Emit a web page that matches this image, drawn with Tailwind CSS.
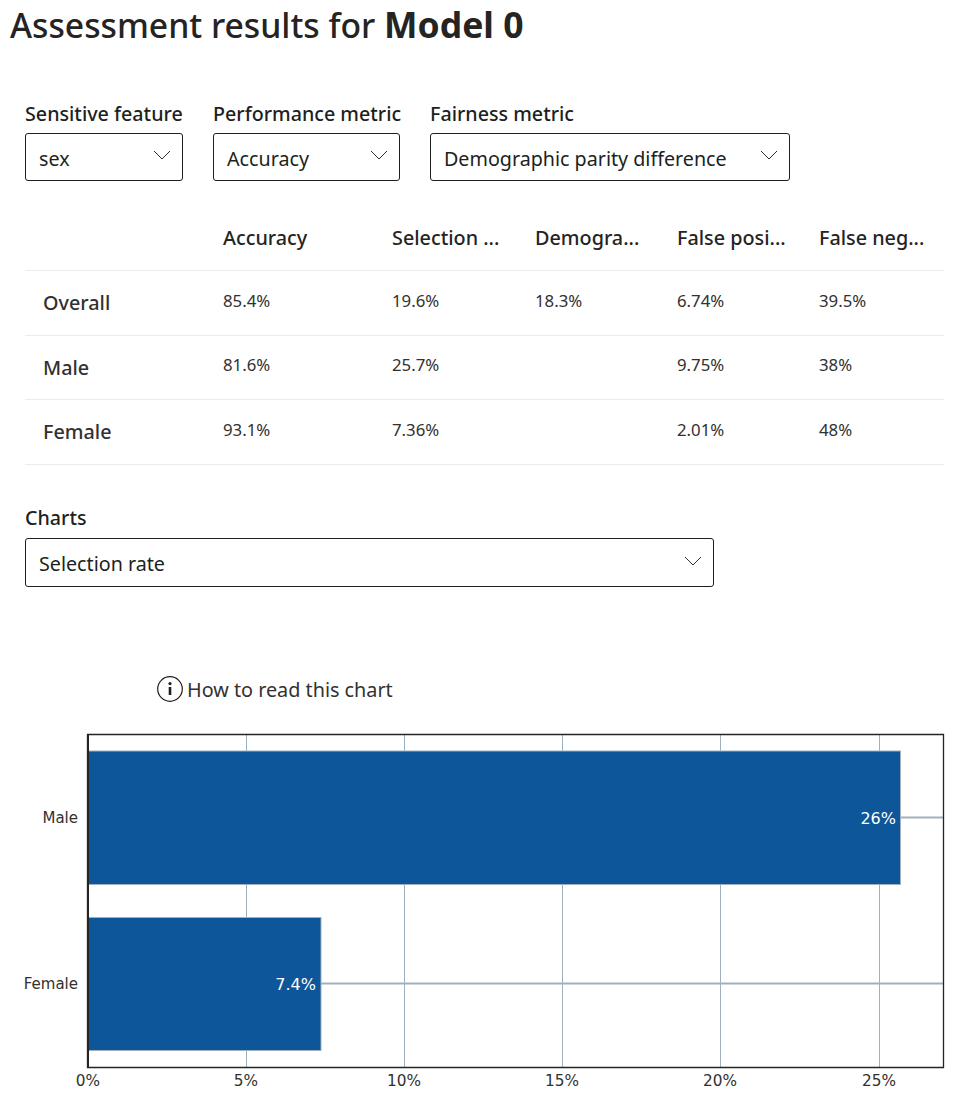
<!DOCTYPE html>
<html lang="en">

<head>
  <meta charset="UTF-8">
  <title>Assessment results</title>
  <script src="https://cdn.jsdelivr.net/npm/@tailwindcss/browser@4"></script>
</head>

<body class="bg-white font-['Noto_Sans',sans-serif] text-[#201f1e]">

  <!-- Title -->
  <h1 class="pl-[10px] h-[52px] text-[33.7px] leading-[48px] font-medium text-[#252423] whitespace-nowrap">Assessment results for <span class="font-bold text-[35.5px]">Model 0</span></h1>

  <!-- Dropdowns -->
  <div class="flex pl-[25px] pt-[48px] gap-[30px]">
    <div class="w-[158px]">
      <div class="h-[33px] text-[19.7px] leading-[28px] font-medium whitespace-nowrap">Sensitive feature</div>
      <div class="h-[48px] border border-[#201f1e] rounded-[3px] flex items-center justify-between pl-[13px] pr-[11px] text-[19.7px]">
        <span class="pt-[3px]">sex</span>
        <svg width="18" height="10" viewBox="0 0 18 10" fill="none" stroke="#323130" class="mb-[4px]"><path d="M1 1l8 8 8-8" /></svg>
      </div>
    </div>
    <div class="w-[187px]">
      <div class="h-[33px] text-[19.7px] leading-[28px] font-medium whitespace-nowrap">Performance metric</div>
      <div class="h-[48px] border border-[#201f1e] rounded-[3px] flex items-center justify-between pl-[13px] pr-[11px] text-[19.7px]">
        <span class="pt-[3px]">Accuracy</span>
        <svg width="18" height="10" viewBox="0 0 18 10" fill="none" stroke="#323130" class="mb-[4px]"><path d="M1 1l8 8 8-8" /></svg>
      </div>
    </div>
    <div class="w-[360px]">
      <div class="h-[33px] text-[19.7px] leading-[28px] font-medium whitespace-nowrap">Fairness metric</div>
      <div class="h-[48px] border border-[#201f1e] rounded-[3px] flex items-center justify-between pl-[13px] pr-[11px] text-[19.7px]">
        <span class="pt-[3px]">Demographic parity difference</span>
        <svg width="18" height="10" viewBox="0 0 18 10" fill="none" stroke="#323130" class="mb-[4px]"><path d="M1 1l8 8 8-8" /></svg>
      </div>
    </div>
  </div>

  <!-- Metrics table -->
  <div class="ml-[25px] w-[919px] mt-[24px] text-[#323130]">
    <div class="grid grid-cols-[198px_169px_143px_142px_142px_1fr] h-[66px] items-center border-b border-[#edebe9] text-[19.8px] font-medium text-[#252423] whitespace-nowrap">
      <div></div>
      <div>Accuracy</div>
      <div>Selection ...</div>
      <div>Demogra...</div>
      <div>False posi...</div>
      <div>False neg...</div>
    </div>
    <div class="grid grid-cols-[198px_169px_143px_142px_142px_1fr] h-[65px] items-center border-b border-[#edebe9] text-[16.8px]">
      <div class="pl-[18px] text-[19.8px] font-medium">Overall</div>
      <div class="pb-[5px]">85.4%</div>
      <div class="pb-[5px]">19.6%</div>
      <div class="pb-[5px]">18.3%</div>
      <div class="pb-[5px]">6.74%</div>
      <div class="pb-[5px]">39.5%</div>
    </div>
    <div class="grid grid-cols-[198px_169px_143px_142px_142px_1fr] h-[64px] items-center border-b border-[#edebe9] text-[16.8px]">
      <div class="pl-[18px] text-[19.8px] font-medium">Male</div>
      <div class="pb-[5px]">81.6%</div>
      <div class="pb-[5px]">25.7%</div>
      <div></div>
      <div class="pb-[5px]">9.75%</div>
      <div class="pb-[5px]">38%</div>
    </div>
    <div class="grid grid-cols-[198px_169px_143px_142px_142px_1fr] h-[65px] items-center border-b border-[#edebe9] text-[16.8px]">
      <div class="pl-[18px] text-[19.8px] font-medium">Female</div>
      <div class="pb-[5px]">93.1%</div>
      <div class="pb-[5px]">7.36%</div>
      <div></div>
      <div class="pb-[5px]">2.01%</div>
      <div class="pb-[5px]">48%</div>
    </div>
  </div>

  <!-- Charts dropdown -->
  <div class="ml-[25px] w-[689px] mt-[36px]">
    <div class="h-[37px] text-[19.7px] leading-[34px] font-medium">Charts</div>
    <div class="h-[49px] border border-[#201f1e] rounded-[3px] flex items-center justify-between pl-[13px] pr-[11px] text-[19.7px]">
      <span class="pt-[2px]">Selection rate</span>
      <svg width="18" height="10" viewBox="0 0 18 10" fill="none" stroke="#323130" class="mb-[4px]"><path d="M1 1l8 8 8-8" /></svg>
    </div>
  </div>

  <!-- How to read -->
  <div class="flex items-center gap-[4px] ml-[157px] mt-[88px] h-[28px] text-[19.8px] text-[#323130] whitespace-nowrap">
    <svg width="26" height="26" viewBox="0 0 26 26" fill="none" stroke="#201f1e">
      <circle cx="13" cy="13" r="12.3" stroke-width="1.2" />
      <path d="M13 11v8" stroke-width="2.6" />
      <circle cx="13" cy="7.6" r="1.6" fill="#201f1e" stroke="none" />
    </svg>
    <span class="pt-[1px]">How to read this chart</span>
  </div>

  <!-- Chart -->
  <svg width="964" height="400" viewBox="0 0 964 400" class="block -mt-px font-['DejaVu_Sans',sans-serif]">
    <!-- origin of this svg is y=702 on the page -->
    <g stroke="#9fb0bf" fill="none" transform="translate(0,-702)">
      <path d="M246.500 735v332M404.500 735v332M562.500 735v332M720.500 735v332M879.500 735v332" />
      <path d="M88 817.500h855M88 983.500h855" stroke-width="2" />
    </g>
    <g transform="translate(0,-702)">
      <rect x="88" y="751" width="812.500" height="133.500" fill="#0c5699" stroke="#9fb0bf" />
      <rect x="88" y="917.500" width="233" height="133" fill="#0c5699" stroke="#9fb0bf" />
      <path d="M87.500 734.500H943.500V1067.500H87.500Z" fill="none" stroke="#252423" stroke-width="1.300" />
      <path d="M88 734v334" stroke="#252423" stroke-width="2" />
      <g font-size="16" fill="#ffffff" text-anchor="end">
        <text x="896" y="824">26%</text>
        <text x="316" y="990">7.4%</text>
      </g>
      <g font-size="15" fill="#323130" text-anchor="end">
        <text x="78" y="823">Male</text>
        <text x="78" y="989">Female</text>
      </g>
      <g font-size="15.300" fill="#323130" text-anchor="middle">
        <text x="88" y="1086">0%</text>
        <text x="246" y="1086">5%</text>
        <text x="404" y="1086">10%</text>
        <text x="562" y="1086">15%</text>
        <text x="720" y="1086">20%</text>
        <text x="879" y="1086">25%</text>
      </g>
    </g>
  </svg>

</body>

</html>
